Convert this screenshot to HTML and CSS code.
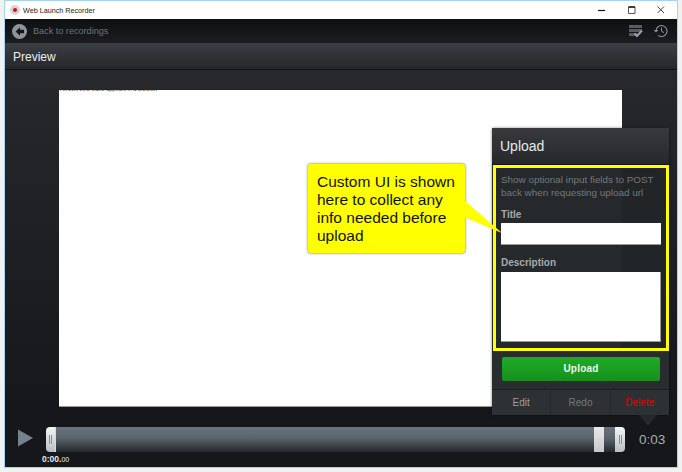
FILE: index.html
```html
<!DOCTYPE html>
<html lang="en">
<head>
<meta charset="utf-8">
<title>Web Launch Recorder</title>
<link rel="stylesheet" href="styles.css">
</head>
<body>
<div class="window">
  <div class="titlebar">
    <span class="app-icon"><span class="app-dot"></span></span>
    <span class="app-name">Web Launch Recorder</span>
    <div class="win-controls">
      <svg class="win-btn" viewBox="0 0 10 10"><path d="M0 5.5H7" stroke="#111" stroke-width="1.2"/></svg>
      <svg class="win-btn" viewBox="0 0 10 10"><path d="M1.5 2H8V8.5H1.5Z" fill="none" stroke="#555" stroke-width="1"/><path d="M1.5 2H8" stroke="#111" stroke-width="1.4"/></svg>
      <svg class="win-btn" viewBox="0 0 10 10"><path d="M1.5 1.5L8 8M8 1.5L1.5 8" stroke="#444" stroke-width="1"/></svg>
    </div>
  </div>
  <div class="topbar">
    <svg class="back-icon" viewBox="0 0 15 15"><circle cx="7.5" cy="7.5" r="7.5" fill="#8d959c"/><path d="M8 3.2L3.6 7.5L8 11.8V9.2H12V5.8H8Z" fill="#14171a"/></svg>
    <span class="back-label">Back to recordings</span>
    <div class="top-icons">
      <svg class="icon-list" viewBox="0 0 15 13"><path d="M1 0H14V3H1ZM1 4H14V7H1ZM1 8H9V11H1Z" fill="#565c62"/><path d="M6.5 8.5L9 11L14 5.5" fill="none" stroke="#9aa0a6" stroke-width="2"/></svg>
      <svg class="icon-history" viewBox="0 0 15 14"><path d="M3 7A5.5 5.5 0 1 1 5 11.3" fill="none" stroke="#8b9197" stroke-width="1.1"/><path d="M0.6 6L3 8.6L5.4 6Z" fill="#8b9197"/><path d="M8.5 3.5V7.2L11 8.6" fill="none" stroke="#8b9197" stroke-width="1"/></svg>
    </div>
  </div>
  <div class="heading"><h1 class="heading-text">Preview</h1></div>
  <div class="main">
    <div class="stage-row">
      <div class="stage"><p class="stage-clip">An overview video appears in a browser</p></div>
    </div>
    <div class="player">
      <svg class="play" viewBox="0 0 16 18"><path d="M0 0L16 9L0 18Z" fill="#75818f"/></svg>
      <div class="timeline">
        <div class="handle handle-left"><span class="grip"></span></div>
        <div class="track"><span class="thumb"></span></div>
        <div class="handle handle-right"><span class="grip"></span></div>
        <span class="time-start">0:00.<small class="time-small">00</small></span>
      </div>
      <span class="time-end">0:03</span>
    </div>
  </div>

  <aside class="panel">
    <h2 class="panel-title">Upload</h2>
    <div class="fields">
      <p class="hint">Show optional input fields to POST back when requesting upload url</p>
      <label class="field-label">Title</label>
      <div class="input"></div>
      <label class="field-label label-desc">Description</label>
      <div class="input textarea"></div>
    </div>
    <div class="submit-wrap"><div class="submit">Upload</div></div>
    <div class="actions">
      <span class="action">Edit</span>
      <span class="action action-mid">Redo</span>
      <span class="action action-del">Delete</span>
    </div>
    <span class="panel-arrow"></span>
  </aside>

  <div class="callout">Custom UI is shown here to collect any info needed before upload
    <svg class="callout-tail" viewBox="0 0 40 40"><path d="M0 0L38 33L0 17Z" fill="#ffff00"/></svg>
  </div>
</div>
</body>
</html>
```
FILE: styles.css
```css
* { box-sizing: border-box; }
html, body { margin: 0; height: 100%; }
body {
  background: #f0f1f1;
  font-family: "Liberation Sans", Arial, sans-serif;
  overflow: hidden;
  padding: 0 4px 4px 4px;
}
.window {
  position: relative;
  width: 674px;
  height: 468px;
  display: flex;
  flex-direction: column;
  border: 1px solid #a6d3f5;
  background: #16181b;
}
.titlebar {
  height: 18px;
  background: #fff;
  display: flex;
  align-items: center;
  padding-left: 5px;
  flex: none;
}
.app-icon {
  width: 10px;
  height: 10px;
  border-radius: 50%;
  background: #d9d5d5;
  display: flex;
  align-items: center;
  justify-content: center;
}
.app-dot { width: 4px; height: 4px; border-radius: 50%; background: #d0101c; }
.app-name { margin-left: 3px; font-size: 7.2px; color: #222; }
.win-controls { margin-left: auto; display: flex; gap: 19px; padding-right: 11px; }
.win-btn { width: 10px; height: 10px; display: block; }
.topbar {
  height: 24px;
  flex: none;
  display: flex;
  align-items: center;
  padding-left: 7px;
  background: linear-gradient(#0e0f11, #1b1d20);
}
.back-icon { width: 15px; height: 15px; }
.back-label { margin-left: 6px; font-size: 9.1px; color: #6f7479; }
.top-icons { margin-left: auto; display: flex; align-items: center; gap: 10px; padding-right: 9px; }
.icon-list { width: 15px; height: 13px; }
.icon-history { width: 15px; height: 14px; }
.heading {
  height: 27px;
  flex: none;
  display: flex;
  align-items: center;
  padding: 2px 0 0 8px;
  background: linear-gradient(#3b3e42, #25272a);
  border-bottom: 1px solid #101113;
}
.heading-text { margin: 0; font-size: 12px; font-weight: 400; color: #eceeef; }
.main {
  flex: 1;
  min-height: 0;
  display: flex;
  flex-direction: column;
  background: linear-gradient(#26282b, #1b1d20 55%, #15171a 85%);
}
.stage-row { flex: none; padding: 20px 0 0 54px; }
.stage {
  width: 563px;
  height: 317px;
  background: #fff;
  border-bottom: 1px solid #9a9a9a;
  overflow: hidden;
}
.stage-clip {
  margin: -4px 0 0 1px;
  font-size: 5.5px;
  line-height: 6px;
  color: #333;
}
.player {
  flex: 1;
  display: flex;
  align-items: flex-start;
  padding: 20px 0 0 13px;
}
.play { width: 15px; height: 18px; margin-top: 2px; flex: none; }
.timeline {
  position: relative;
  margin-left: 13px;
  width: 579px;
  height: 25px;
  display: flex;
}
.handle {
  width: 10px;
  flex: none;
  background: linear-gradient(#f4f5f6, #b9bfc4);
  display: flex;
  align-items: center;
  justify-content: center;
}
.handle-left { border-radius: 4px 0 0 4px; border-right: 1px solid #d8dcdf; }
.handle-right { border-radius: 0 4px 4px 0; }
.grip { width: 3px; height: 9px; border-left: 1px solid #8b9096; border-right: 1px solid #8b9096; }
.track {
  flex: 1;
  display: flex;
  justify-content: flex-end;
  padding-right: 11px;
  background: linear-gradient(#69737d, #5a636c 45%, #2f3337 90%, #24272a);
}
.thumb { width: 10px; background: linear-gradient(#e9e9e9, #c8c8c8); }
.time-start {
  position: absolute;
  left: -4px;
  top: 27px;
  font-size: 8.5px;
  font-weight: 700;
  color: #e8e8e8;
  line-height: 10px;
}
.time-small { font-size: 7px; font-weight: 400; }
.time-end {
  margin-left: 14px;
  margin-top: 5px;
  font-size: 13.5px;
  color: #a7acb1;
}
.panel {
  position: absolute;
  left: 487px;
  top: 127px;
  width: 177px;
  height: 287px;
  display: flex;
  flex-direction: column;
  background: rgba(35, 38, 41, .985);
  border-radius: 2px;
  box-shadow: 0 0 3px rgba(0, 0, 0, .5);
}
.panel-title {
  margin: 0;
  height: 37px;
  flex: none;
  padding: 9px 0 0 8px;
  font-size: 14px;
  line-height: 18px;
  font-weight: 400;
  color: #e6e8ea;
  background: linear-gradient(#37393d, #26282b);
  border-bottom: 1px solid #121315;
}
.fields {
  height: 186px;
  flex: none;
  margin: 0 0 0 1px;
  border: 3px solid #ffff00;
  padding: 6px 5px 0 5px;
  display: flex;
  flex-direction: column;
}
.hint { margin: 0; font-size: 9.9px; line-height: 12.5px; color: #73787d; }
.field-label { font-size: 10px; font-weight: 700; color: #a5a9ad; margin-top: 10px; line-height: 12px; }
.label-desc { margin-top: 12px; }
.input { height: 22px; flex: none; margin-top: 2px; background: #fff; border-bottom: 1px solid #999; }
.textarea { height: 70px; margin-top: 3px; border-right: 1px solid #999; }
.submit-wrap { flex: none; height: 38px; padding: 6px 9px 0 10px; background: #2a2d30; }
.submit {
  height: 24px;
  border-radius: 2px;
  background: linear-gradient(#1fab24, #168f1e);
  color: #f2f4f2;
  font-size: 10px;
  font-weight: 700;
  letter-spacing: .2px;
  text-align: center;
  line-height: 24px;
}
.actions { flex: 1; display: flex; background: #2e3134; border-top: 1px solid #1c1e20; }
.action {
  flex: 1;
  text-align: center;
  font-size: 10px;
  line-height: 25px;
  color: #9a9fa3;
}
.action-mid { color: #73787d; border-left: 1px solid #26282b; border-right: 1px solid #26282b; }
.action-del { color: #d80808; }
.panel-arrow {
  position: absolute;
  left: 147px;
  bottom: -11px;
  width: 0;
  height: 0;
  border-left: 9px solid transparent;
  border-right: 9px solid transparent;
  border-top: 11px solid #25282b;
}
.callout {
  position: absolute;
  left: 303px;
  top: 163px;
  width: 157px;
  height: 89px;
  padding: 9px;
  background: #ffff00;
  border-radius: 3px;
  box-shadow: 0 0 2px 1px rgba(120, 120, 120, .55);
  font-size: 15.5px;
  line-height: 18px;
  color: #111;
}
.callout-tail {
  position: absolute;
  left: 156px;
  top: 36px;
  width: 40px;
  height: 40px;
  overflow: visible;
}
```
